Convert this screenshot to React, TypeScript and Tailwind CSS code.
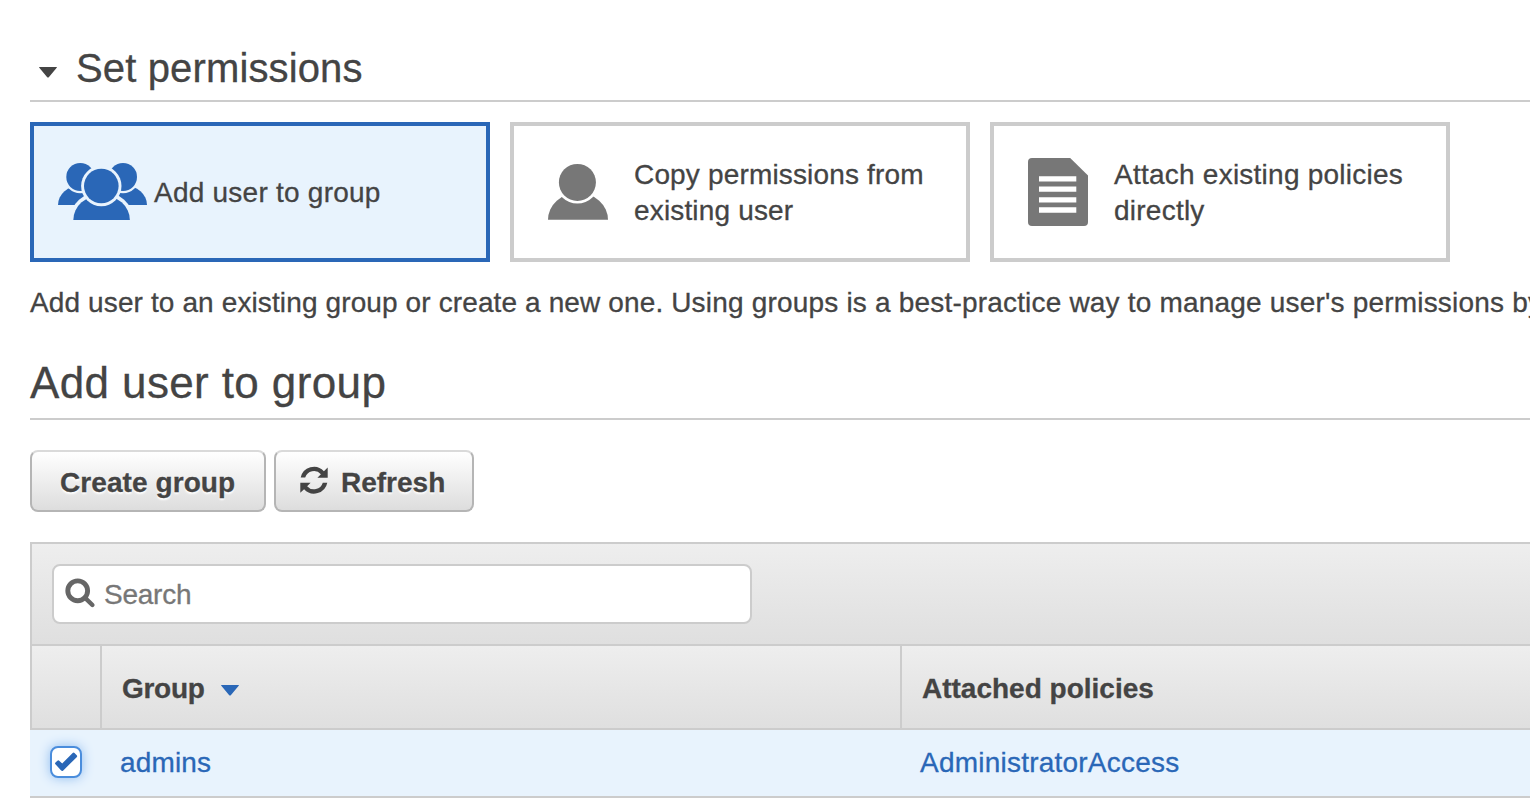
import React from "react";

function RefreshIcon({ className }: { className: string }) {
  const arrow = "M6.7 17.6A13.5 13.5 0 0 1 29.9 11.2L33.7 7.6V17.7H23.4L26.9 14.2A9.2 9.2 0 0 0 11.2 17.6Z";
  return (
    <svg viewBox="0 0 40 40" fill="currentColor" className={className}>
      <path d={arrow} />
      <path d={arrow} transform="rotate(180 20 20.2)" />
    </svg>
  );
}

function SearchIcon({ className }: { className: string }) {
  return (
    <svg viewBox="6 7 32 32" fill="none" stroke="currentColor" strokeWidth="4.9" strokeLinecap="round" className={className}>
      <circle cx="19.7" cy="20.8" r="9.9" />
      <path strokeWidth="4.4" d="M27.6 28.4L34.4 35" />
    </svg>
  );
}

function CheckIcon({ className }: { className: string }) {
  return (
    <svg
      viewBox="12 12 28 28"
      fill="currentColor"
      stroke="currentColor"
      strokeWidth="2.6"
      strokeLinejoin="round"
      className={className}
    >
      <path d="M16.4 27.4L18.3 25.6L22.2 29.3L33.6 18L35.8 20.2L22.1 33.7Z" />
    </svg>
  );
}

function Caret({ className }: { className: string }) {
  return (
    <svg viewBox="0 0 18 11" fill="currentColor" className={className}>
      <path d="M0.6 0H17.4Q18.4 0 17.7 0.8L10 9.9Q9 11 8 9.9L0.3 0.8Q-0.4 0 0.6 0Z" />
    </svg>
  );
}

function GroupIcon() {
  return (
    <svg viewBox="58 162 89 60" className="h-[60px] w-[89px] shrink-0 fill-[#2a67b7]">
      <path d="M58 205A22.3 19.5 0 0 1 102.6 205Z" />
      <path d="M102.4 205A22.3 19.5 0 0 1 147 205Z" />
      <circle cx="80.3" cy="177" r="16.2" className="fill-[#e8f3fd]" />
      <circle cx="123" cy="177" r="16.2" className="fill-[#e8f3fd]" />
      <circle cx="80.3" cy="177" r="14" />
      <circle cx="123" cy="177" r="14" />
      <path d="M69.7 220A31.9 28.7 0 0 1 133.5 220Z" className="fill-[#e8f3fd]" />
      <path d="M73.3 220A28.3 25 0 0 1 129.9 220Z" />
      <circle cx="101.3" cy="186" r="20.2" className="fill-[#e8f3fd]" />
      <circle cx="101.3" cy="186" r="17.3" />
    </svg>
  );
}

function UserIcon() {
  return (
    <svg viewBox="548 163 60 58" className="h-[58px] w-[60px] fill-[#777]">
      <path d="M548 219.8A30 27 0 0 1 608 219.8Z" />
      <circle cx="577.4" cy="182.4" r="21.2" className="fill-white" />
      <circle cx="577.4" cy="182.4" r="18.5" />
    </svg>
  );
}

function DocumentIcon() {
  return (
    <svg viewBox="0 0 60 68" className="h-[68px] w-[60px] fill-[#777]">
      <path d="M4 0H42.2L60 17.4V64Q60 68 56 68H4Q0 68 0 64V4Q0 0 4 0Z" />
      <path className="fill-white" d="M11 18.2H48.3V23.6H11ZM11 28.4H48.3V33.8H11ZM11 39.2H48.3V44.5H11ZM11 49.3H48.3V54.7H11Z" />
    </svg>
  );
}

const buttonClass =
  "flex h-[62px] items-center rounded-lg border-2 border-[#b5b5b5] border-t-[#dadada] bg-linear-to-b from-white to-[#dddddd] pt-[3px] font-bold [text-shadow:0_2px_2px_#ffffff]";

export default function App() {
  return (
    <main className="h-[810px] w-[1530px] overflow-hidden bg-white pl-[30px] font-['Liberation_Sans',Arial,sans-serif] text-[28px] leading-9 text-[#444] [-webkit-text-stroke:0.3px]">
      <h1 className="flex h-[102px] items-start border-b-2 border-[#ccc] pt-[44px] text-[40px] leading-[48px]">
        <Caret className="mt-[23px] mr-[19px] ml-[9px] h-[11px] w-[18px]" />
        <span className="tracking-[0.14px]">Set permissions</span>
      </h1>

      <div className="mt-5 flex gap-5">
        <button className="flex h-[140px] w-[460px] items-center border-4 border-[#2a67b7] bg-[#e8f3fd] pl-[24px] text-left">
          <GroupIcon />
          <span className="ml-[7px] pt-[2px] tracking-[0.24px]">Add user to group</span>
        </button>
        <button className="flex h-[140px] w-[460px] items-center border-4 border-[#ccc] pl-[34px] text-left">
          <UserIcon />
          <span className="ml-[26px] pt-[2px] tracking-[0.16px]">
            Copy permissions from
            <br />
            existing user
          </span>
        </button>
        <button className="flex h-[140px] w-[460px] items-center border-4 border-[#ccc] pl-[34px] text-left">
          <DocumentIcon />
          <span className="ml-[26px] pt-[2px] tracking-[0.24px]">
            Attach existing policies
            <br />
            directly
          </span>
        </button>
      </div>

      <p className="mt-[23px] whitespace-nowrap">
        <span className="tracking-[0.12px]">Add user to an existing group or create a new one. </span>
        <span className="tracking-[0.19px]">
          Using groups is a best-practice way to manage user's permissions by
        </span>
      </p>

      <h2 className="mt-[36px] h-[63px] border-b-2 border-[#ccc] text-[44px] leading-[52px] tracking-[0.38px]">Add user to group</h2>

      <div className="mt-[30px] flex gap-2">
        <button className={`${buttonClass} w-[236px] pl-[28px] tracking-[0.08px]`}>Create group</button>
        <button className={`${buttonClass} w-[200px] pl-[18px]`}>
          <RefreshIcon className="-mt-[5px] mr-[7px] h-10 w-10" />
          Refresh
        </button>
      </div>

      <section className="mt-[30px]">
        <div className="flex h-[104px] items-start border-y-2 border-l-2 border-[#ccc] bg-linear-to-b from-[#eee] to-[#dfdfdf] pt-5 pl-5">
          <label className="flex h-[60px] w-[700px] items-center rounded-lg border-2 border-[#ccc] bg-white pl-[10px]">
            <SearchIcon className="-mt-[2px] h-8 w-8 text-[#666]" />
            <input
              placeholder="Search"
              className="ml-2 w-[600px] bg-transparent pt-[2px] tracking-[-0.25px] outline-none placeholder:text-[#777]"
            />
          </label>
        </div>
        <div className="flex h-[84px] border-b-2 border-l-2 border-[#ccc] bg-linear-to-b from-[#eee] to-[#dfdfdf] font-bold">
          <div className="w-[70px] border-r-2 border-[#ccc]" />
          <div className="flex w-[800px] items-center border-r-2 border-[#ccc] pt-[3px] pl-5">
            <span className="tracking-[-0.3px]">Group</span>
            <Caret className="mt-[3px] ml-4 h-[11px] w-[18px] text-[#2a67b7]" />
          </div>
          <div className="flex items-center pt-[3px] pl-5">Attached policies</div>
        </div>
        <div className="flex h-[68px] items-center border-b-2 border-[#ccc] bg-[#e8f3fd] text-[#2a67b7]">
          <div className="w-[90px] pb-[2px] pl-5">
            <span className="flex h-8 w-8 items-center justify-center rounded-lg border-2 border-[#4a8ddc] bg-white shadow-[0_0_12px_#8fbcf0]">
              <CheckIcon className="h-7 w-7 shrink-0" />
            </span>
          </div>
          <a className="w-[800px] tracking-[0.15px]">admins</a>
          <a className="tracking-[0.22px]">AdministratorAccess</a>
        </div>
      </section>
    </main>
  );
}
